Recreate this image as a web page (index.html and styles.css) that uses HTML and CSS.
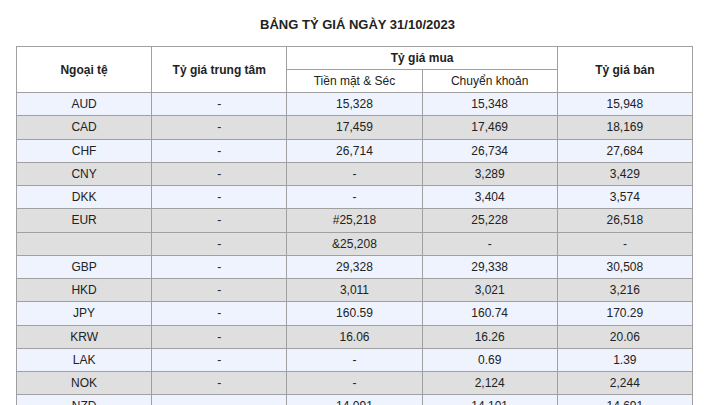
FILE: index.html
```html
<!DOCTYPE html>
<html lang="vi">
<head>
<meta charset="utf-8">
<link rel="stylesheet" href="styles.css">
</head>
<body>
<div class="page">
  <h1 class="title">BẢNG TỶ GIÁ NGÀY 31/10/2023</h1>
  <table class="rates">
    <thead>
      <tr class="h1row">
        <th rowspan="2">Ngoại tệ</th>
        <th rowspan="2">Tỷ giá trung tâm</th>
        <th colspan="2">Tỷ giá mua</th>
        <th rowspan="2">Tỷ giá bán</th>
      </tr>
      <tr class="h2row">
        <th class="sub">Tiền mặt &amp; Séc</th>
        <th class="sub">Chuyển khoản</th>
      </tr>
    </thead>
    <tbody>
      <tr class="odd"><td>AUD</td><td>-</td><td>15,328</td><td>15,348</td><td>15,948</td></tr>
      <tr class="even"><td>CAD</td><td>-</td><td>17,459</td><td>17,469</td><td>18,169</td></tr>
      <tr class="odd"><td>CHF</td><td>-</td><td>26,714</td><td>26,734</td><td>27,684</td></tr>
      <tr class="even"><td>CNY</td><td>-</td><td>-</td><td>3,289</td><td>3,429</td></tr>
      <tr class="odd"><td>DKK</td><td>-</td><td>-</td><td>3,404</td><td>3,574</td></tr>
      <tr class="even"><td>EUR</td><td>-</td><td>#25,218</td><td>25,228</td><td>26,518</td></tr>
      <tr class="even"><td></td><td>-</td><td>&amp;25,208</td><td>-</td><td>-</td></tr>
      <tr class="odd"><td>GBP</td><td>-</td><td>29,328</td><td>29,338</td><td>30,508</td></tr>
      <tr class="even"><td>HKD</td><td>-</td><td>3,011</td><td>3,021</td><td>3,216</td></tr>
      <tr class="odd"><td>JPY</td><td>-</td><td>160.59</td><td>160.74</td><td>170.29</td></tr>
      <tr class="even"><td>KRW</td><td>-</td><td>16.06</td><td>16.26</td><td>20.06</td></tr>
      <tr class="odd"><td>LAK</td><td>-</td><td>-</td><td>0.69</td><td>1.39</td></tr>
      <tr class="even"><td>NOK</td><td>-</td><td>-</td><td>2,124</td><td>2,244</td></tr>
      <tr class="odd"><td>NZD</td><td>-</td><td>14,091</td><td>14,101</td><td>14,691</td></tr>
    </tbody>
  </table>
</div>
</body>
</html>
```

FILE: styles.css
```css
html, body {
  margin: 0;
  padding: 0;
  background: #ffffff;
}
body {
  font-family: "Liberation Sans", Arial, sans-serif;
  color: #222222;
  overflow: hidden;
}
.page {
  padding: 0 26px 0 16px;
}
.title {
  margin: 0;
  padding-top: 17px;
  height: 29px;
  font-size: 13px;
  font-weight: bold;
  text-align: center;
  line-height: 16px;
  box-sizing: content-box;
  padding-left: 6px;
}
.rates {
  width: 677px;
  border-collapse: collapse;
  table-layout: fixed;
  font-size: 12px;
}
.rates th,
.rates td {
  border: 1px solid #a0a0a0;
  text-align: center;
  padding: 0;
  vertical-align: middle;
}
.rates th {
  font-weight: bold;
  background: #ffffff;
}
.rates th.sub {
  font-weight: normal;
}
.h1row th,
.h2row th {
  height: 22px;
}
.rates td {
  height: 22.26px;
}
.odd td {
  background: #eef3fe;
}
.even td {
  background: #dfdfdf;
}
```
